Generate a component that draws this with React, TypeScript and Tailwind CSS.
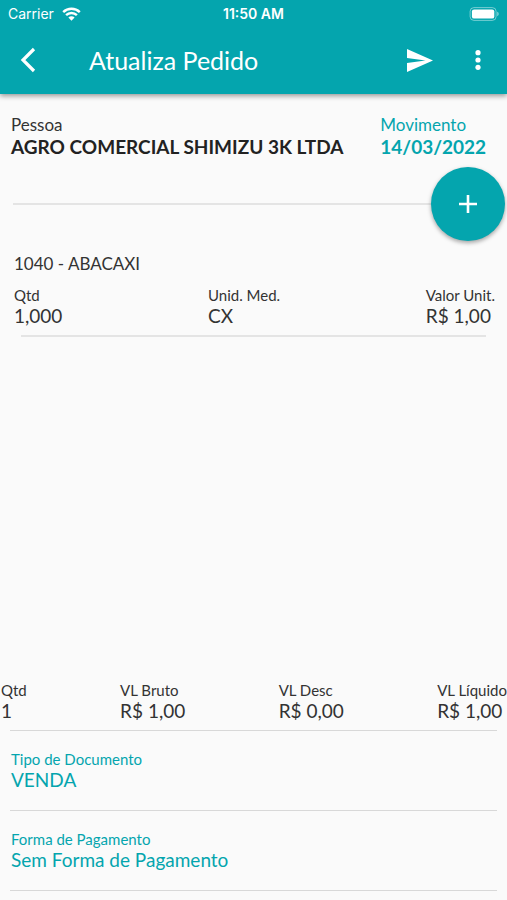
import type { ReactNode } from 'react';

type FieldProps = {
  label: string;
  value: string;
};

function Field({ label, value }: FieldProps) {
  return (
    <div>
      <dt className="text-[15px] leading-5">{label}</dt>
      <dd className="text-[19px] leading-[21px]">{value}</dd>
    </div>
  );
}

function PickerButton({ label, value }: FieldProps) {
  return (
    <button type="button" className="block w-full px-[11px] pt-[18px] pb-5 text-left text-[#04a5ae]">
      <span className="block text-[15px] leading-5">{label}</span>
      <span className="block text-[19px] leading-[21px]">{value}</span>
    </button>
  );
}

function IconButton({ label, children }: { label: string; children: ReactNode }) {
  return (
    <button type="button" aria-label={label} className="flex size-12 items-center justify-center">
      {children}
    </button>
  );
}

function StatusBar() {
  return (
    <div className="grid h-7 grid-cols-3 items-center px-2 font-['Inter',sans-serif] text-sm">
      <div className="flex items-center gap-2">
        <span>Carrier</span>
        <svg width="19" height="14" viewBox="0 0 19 14" fill="none" stroke="currentColor" strokeWidth="2.4">
          <path d="M1.2 5.2a11.8 11.8 0 0 1 16.6 0" />
          <path d="M4.1 8.2a7.6 7.6 0 0 1 10.8 0" />
          <path d="M9.5 13.8 6.4 10.6a4.4 4.4 0 0 1 6.2 0Z" fill="currentColor" stroke="none" />
        </svg>
      </div>
      <span className="text-center font-semibold">11:50 AM</span>
      <svg className="justify-self-end" width="30" height="14" viewBox="0 0 30 14">
        <rect x="1.1" y="0.6" width="26" height="12.8" rx="3.8" fill="none" stroke="#fff" strokeOpacity="0.45" />
        <rect x="2.9" y="2.4" width="22.4" height="9.2" rx="2.2" fill="#fff" />
        <path d="M28.2 4.8c2 .6 2 3.8 0 4.4Z" fill="#fff" fillOpacity="0.5" />
      </svg>
    </div>
  );
}

export default function App() {
  const totals = [
    { label: 'Qtd', value: '1' },
    { label: 'VL Bruto', value: 'R$ 1,00' },
    { label: 'VL Desc', value: 'R$ 0,00' },
    { label: 'VL Líquido', value: 'R$ 1,00' }
  ];

  return (
    <div className="flex min-h-screen flex-col overflow-x-hidden bg-[#fafafa] font-['Lato',sans-serif] text-[#333333]">
      {/* App bar */}
      <header className="bg-[#04a5ae] text-white shadow-[0_2px_5px_rgba(0,0,0,0.4)]">
        <StatusBar />
        <div className="flex h-[66px] items-center pr-[5px] pb-0.5 pl-1">
          <IconButton label="Voltar">
            <svg width="16" height="26" viewBox="0 0 16 26" fill="none" stroke="currentColor" strokeWidth="3.2">
              <path d="M14 2 3 13l11 11" />
            </svg>
          </IconButton>
          <h1 className="flex-1 pl-[37px] text-[25px] leading-8">Atualiza Pedido</h1>
          <div className="flex gap-2.5">
            <IconButton label="Enviar">
              <svg width="26" height="23" viewBox="0 0 26 23" fill="currentColor">
                <path d="M0 23 26 11.5 0 0v9l18.5 2.5L0 14Z" />
              </svg>
            </IconButton>
            <IconButton label="Mais opções">
              <svg width="6" height="20" viewBox="0 0 6 20" fill="currentColor">
                <circle cx="3" cy="2.7" r="2.6" />
                <circle cx="3" cy="10" r="2.6" />
                <circle cx="3" cy="17.3" r="2.6" />
              </svg>
            </IconButton>
          </div>
        </div>
      </header>

      <main className="flex flex-1 flex-col">
        {/* Customer and date */}
        <dl className="flex pt-5 leading-[22px]">
          <div className="w-3/4 pl-[11px]">
            <dt className="text-[17px]">Pessoa</dt>
            <dd className="text-[19px] font-bold text-[#222222]">AGRO COMERCIAL SHIMIZU 3K LTDA</dd>
          </div>
          <div className="w-1/4 text-[#04a5ae]">
            <dt className="text-[17px]">Movimento</dt>
            <dd className="text-[19px] font-bold">14/03/2022</dd>
          </div>
        </dl>

        <div className="mt-[9px] flex items-center pr-0.5 pl-[13px]">
          <hr className="flex-1 border-t-2 border-[#e4e4e4]" />
          <button
            type="button"
            aria-label="Adicionar item"
            className="flex size-[74px] items-center justify-center rounded-full bg-[#04a5ae] text-white shadow-[0_2px_4px_rgba(0,0,0,0.35)]"
          >
            <svg width="18" height="18" viewBox="0 0 18 18" stroke="currentColor" strokeWidth="2.6">
              <path d="M9 0v18M0 9h18" />
            </svg>
          </button>
        </div>

        {/* Items */}
        <section className="pt-3">
          <h2 className="px-3.5 text-[17px] leading-[22px]">1040 - ABACAXI</h2>
          <dl className="mt-2.5 flex justify-between pr-3 pl-3.5">
            <Field label="Qtd" value="1,000" />
            <Field label="Unid. Med." value="CX" />
            <Field label="Valor Unit." value="R$ 1,00" />
          </dl>
          <hr className="mx-[21px] mt-[9px] border-t-2 border-[#e4e4e4]" />
        </section>

        {/* Totals */}
        <section className="mt-auto pb-[9px]">
          <dl className="flex justify-between pb-[9px] pl-px">
            {totals.map((total) => (
              <Field key={total.label} label={total.label} value={total.value} />
            ))}
          </dl>
          <hr className="mx-2.5 border-[#d8d8d8]" />
          <PickerButton label="Tipo de Documento" value="VENDA" />
          <hr className="mx-2.5 border-[#d8d8d8]" />
          <PickerButton label="Forma de Pagamento" value="Sem Forma de Pagamento" />
          <hr className="mx-2.5 border-[#d8d8d8]" />
        </section>
      </main>
    </div>
  );
}
